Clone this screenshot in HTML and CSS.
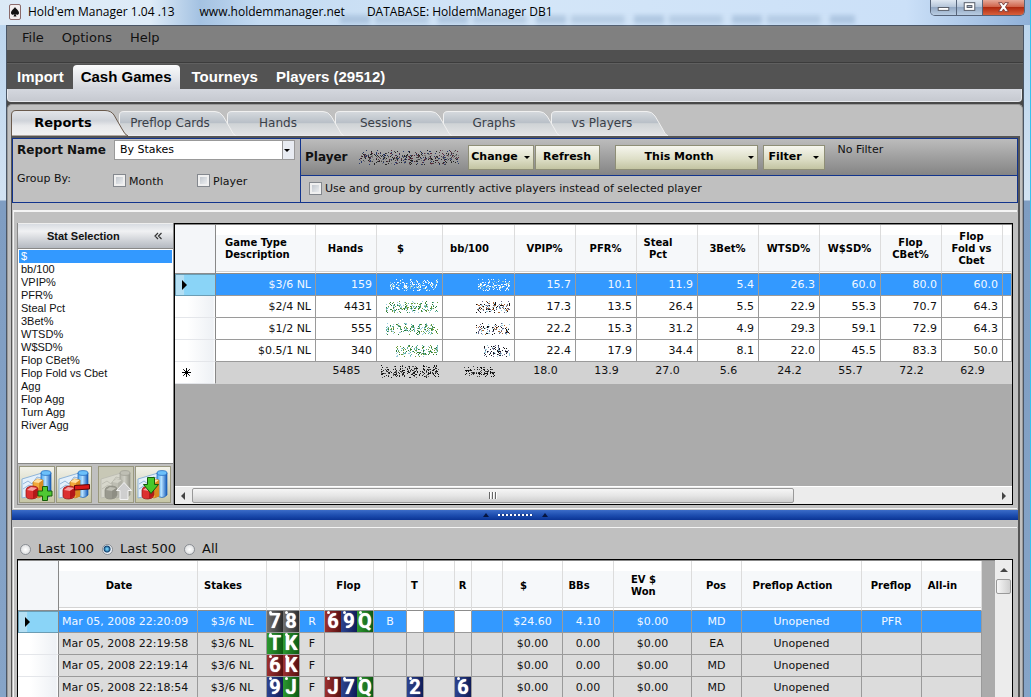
FILE: index.html
```html
<!DOCTYPE html>
<html lang="en">
<head>
<meta charset="utf-8">
<title>Hold'em Manager</title>
<link rel="stylesheet" href="styles.css">
</head>
<body>
<svg class="defs" aria-hidden="true">
  <defs>
    <linearGradient id="g-blue"><stop offset="0" stop-color="#4aa8f4"/><stop offset=".45" stop-color="#b4e0ff"/><stop offset="1" stop-color="#1258b8"/></linearGradient>
    <linearGradient id="g-tab" x2="0" y2="1"><stop offset="0" stop-color="#d6dade"/><stop offset=".45" stop-color="#b9c0c8"/><stop offset=".5" stop-color="#cfd3d6"/><stop offset="1" stop-color="#e4e5e6"/></linearGradient>
    <linearGradient id="g-tab-on" x2="0" y2="1"><stop offset="0" stop-color="#e4e6ea"/><stop offset=".4" stop-color="#cfd3d9"/><stop offset=".6" stop-color="#e8e9eb"/><stop offset="1" stop-color="#f4f4f4"/></linearGradient>
    <symbol id="chart" viewBox="0 0 32 32">
      <path d="M1 10 21 4V25L1 29Z" fill="#e4f0fb" stroke="#8fb4d8"/>
      <path d="M2 15 7 12 11 15 16 8 20 9M2 20 8 16 13 19" fill="none" stroke="#7fa6d0" stroke-width=".8"/>
      <path d="M20 4V26Q25 31 30 26V4Z" fill="url(#g-blue)" stroke="#1c5fb0" stroke-width=".7"/>
      <ellipse cx="25" cy="4" rx="5" ry="2.400" fill="#6cc0fa" stroke="#1c63b8" stroke-width=".7"/>
      <path d="M12 13 16 10 22 11V27L17 29 12 27Z" fill="#f2a93a" stroke="#b8721a" stroke-width=".7"/>
      <path d="M12 13 16 10 22 11 18 14Z" fill="#ffe0a0"/>
      <path d="M18 14 22 11V27L18 29Z" fill="#d98a20"/>
      <path d="M5 21Q5 18 10 17 17 17 17 20V26Q16 30 11 30 5 30 5 27Z" fill="#dc3030" stroke="#8f1010" stroke-width=".7"/>
      <path d="M6 21 10 18 16 19 12 22Z" fill="#f8a0a0"/>
      <path d="M12 22 17 19V26L12 30Z" fill="#b31818"/>
    </symbol>
  </defs>
</svg>

<div class="window">
  <header class="titlebar">
    <span class="glass" aria-hidden="true"></span>
    <svg class="app-icon" viewBox="0 0 12 16" aria-hidden="true"><rect x=".5" y=".5" width="11" height="15" rx="1.5" fill="#f2eeee" stroke="#8a6a6a"/><path d="M6 3C5 5 2 6.5 2 9c0 2 2.500 2.200 3.500 1L4.500 12.500h3L6.500 10C7.500 11.200 10 11 10 9 10 6.500 7 5 6 3Z" fill="#111"/></svg>
    <span class="title-name">Hold'em Manager 1.04 .13</span>
    <span class="title-site">www.holdemmanager.net</span>
    <span>DATABASE: HoldemManager DB1</span>
    <div class="win-buttons">
      <button type="button" aria-label="Minimize"><svg viewBox="0 0 26 15"><rect x="7.500" y="7.500" width="11" height="3" fill="#fff" stroke="#555a66"/></svg></button>
      <button type="button" aria-label="Maximize"><svg viewBox="0 0 26 15"><rect x="7.500" y="2.500" width="11" height="8" fill="#fff" stroke="#555a66"/><rect x="10.500" y="5.500" width="5" height="2" fill="#aab6c8" stroke="#555a66"/></svg></button>
      <button type="button" class="close" aria-label="Close"><svg viewBox="0 0 42 15"><path d="M16 2.500h3.500L21 5l1.500-2.500H26L23 7l3 4.500h-3.500L21 9l-1.500 2.500H16L19 7Z" fill="#fff" stroke="#6b3030" stroke-width=".8"/></svg></button>
    </div>
  </header>

  <div class="client">
    <nav class="menu">
      <button type="button">File</button>
      <button type="button">Options</button>
      <button type="button">Help</button>
    </nav>
    <nav class="main-tabs">
      <button type="button">Import</button>
      <button type="button" class="on">Cash Games</button>
      <button type="button">Tourneys</button>
      <button type="button">Players (29512)</button>
    </nav>
    <div class="strip"></div>

    <main class="page">
      <nav class="sub-tabs">
        <button type="button" class="on"><svg viewBox="0 0 118 26"><path d="M.5 26V5Q.5.500 5 .500H94Q100 .500 103 5L111 19Q114 25 117 26Z" fill="url(#g-tab-on)" stroke="#6a5a4c"/></svg><span>Reports</span></button>
        <button type="button"><svg viewBox="0 0 118 26"><path d="M.5 26V5Q.5 1.500 5 1.500H96Q101 1.500 104 6L111 18Q114 25 117 26Z" fill="url(#g-tab)" stroke="#f0f0f0"/></svg><span>Preflop Cards</span></button>
        <button type="button"><svg viewBox="0 0 118 26"><path d="M.5 26V5Q.5 1.500 5 1.500H96Q101 1.500 104 6L111 18Q114 25 117 26Z" fill="url(#g-tab)" stroke="#f0f0f0"/></svg><span>Hands</span></button>
        <button type="button"><svg viewBox="0 0 118 26"><path d="M.5 26V5Q.5 1.500 5 1.500H96Q101 1.500 104 6L111 18Q114 25 117 26Z" fill="url(#g-tab)" stroke="#f0f0f0"/></svg><span>Sessions</span></button>
        <button type="button"><svg viewBox="0 0 118 26"><path d="M.5 26V5Q.5 1.500 5 1.500H96Q101 1.500 104 6L111 18Q114 25 117 26Z" fill="url(#g-tab)" stroke="#f0f0f0"/></svg><span>Graphs</span></button>
        <button type="button"><svg viewBox="0 0 118 26"><path d="M.5 26V5Q.5 1.500 5 1.500H96Q101 1.500 104 6L111 18Q114 25 117 26Z" fill="url(#g-tab)" stroke="#f0f0f0"/></svg><span>vs Players</span></button>
      </nav>

      <div class="report">
        <div class="filters">
          <section class="report-box">
            <div class="report-row">
              <label class="strong" for="report">Report Name</label>
              <span class="combo"><select id="report"><option>By Stakes</option></select></span>
            </div>
            <div class="group-row">
              <span>Group By:</span>
              <label><input type="checkbox">Month</label>
              <label><input type="checkbox">Player</label>
            </div>
          </section>
          <section class="player-box">
            <div class="player-row">
              <span class="strong">Player</span>
              <span class="specks player-name" data-w="100" data-h="15" data-tones="#222 #444 #5a2a3a #2a3a6a #777" data-seed="3"></span>
              <div class="pair">
                <button type="button" class="tan change">Change<i class="caret"></i></button>
                <button type="button" class="tan refresh">Refresh</button>
              </div>
              <button type="button" class="tan month">This Month<i class="caret"></i></button>
              <button type="button" class="tan filter">Filter<i class="caret"></i></button>
              <span class="no-filter">No Filter</span>
            </div>
            <div class="active-row">
              <label><input type="checkbox">Use and group by currently active players instead of selected player</label>
            </div>
          </section>
        </div>

        <section class="stats">
          <aside class="stat-panel">
            <div class="stat-head"><span>Stat Selection</span><svg viewBox="0 0 8 8"><path d="M4 1 1 4 4 7M7.500 1 4.500 4 7.500 7" fill="none" stroke="#333" stroke-width="1.200"/></svg></div>
            <ul class="stat-list">
              <li class="on">$</li><li>bb/100</li><li>VPIP%</li><li>PFR%</li><li>Steal Pct</li><li>3Bet%</li><li>WTSD%</li><li>W$SD%</li><li>Flop CBet%</li><li>Flop Fold vs Cbet</li><li>Agg</li><li>Flop Agg</li><li>Turn Agg</li><li>River Agg</li>
            </ul>
            <div class="stat-tools">
              <button type="button" aria-label="Add stat"><svg viewBox="0 0 32 32"><use href="#chart"/><path d="M21.500 17.500h5v4.500h4.500v5h-4.500v4.500h-5v-4.500H17v-5h4.500Z" fill="#4fc832" stroke="#145c0c"/></svg></button>
              <button type="button" aria-label="Remove stat"><svg viewBox="0 0 32 32"><use href="#chart"/><path d="M16.500 16.500 31.500 15.500V20L16.500 21Z" fill="#d81818" stroke="#5c0808"/></svg></button>
              <button type="button" class="off" aria-label="Move stat up" disabled><svg viewBox="0 0 32 32"><use href="#chart" class="faded"/><path d="M24 13.500 31.500 21.500H28V30.500H20V21.500H16.500Z" fill="#cfcfcf" stroke="#f2f2f2"/></svg></button>
              <button type="button" aria-label="Move stat down"><svg viewBox="0 0 32 32"><use href="#chart"/><path d="M10.500 8.500h7V15.500H21.500L14 24.500 6.500 15.500H10.500Z" fill="#46c82a" stroke="#145c0c"/></svg></button>
            </div>
          </aside>

          <div class="grid-box">
            <div class="grid-area">
              <table class="grid stakes">
                <colgroup><col class="w41"><col class="w100"><col class="w61"><col class="w66"><col class="w72"><col class="w61"><col class="w61"><col class="w61"><col class="w61"><col class="w61"><col class="w61"><col class="w61"><col class="w61"><col></colgroup>
                <thead><tr><th></th><th class="left">Game Type<br>Description</th><th>Hands</th><th class="sort">$</th><th class="sort">bb/100</th><th>VPIP%</th><th>PFR%</th><th class="sort">Steal<br>Pct</th><th>3Bet%</th><th>WTSD%</th><th>W$SD%</th><th>Flop<br>CBet%</th><th>Flop<br>Fold vs<br>Cbet</th><th></th></tr></thead>
                <tbody>
                  <tr class="on"><th><i class="pointer"></i></th><td>$3/6 NL</td><td>159</td><td><span class="specks" data-w="48" data-h="12" data-tones="#fff #d8ecff #9cc" data-seed="5"></span></td><td><span class="specks" data-w="32" data-h="12" data-tones="#fff #d8ecff #9cc" data-seed="7"></span></td><td>15.7</td><td>10.1</td><td>11.9</td><td>5.4</td><td>26.3</td><td>60.0</td><td>80.0</td><td>60.0</td><td></td></tr>
                  <tr><th></th><td>$2/4 NL</td><td>4431</td><td><span class="specks" data-w="52" data-h="12" data-tones="#2a7a3a #6a9a3a #5ab0a0 #9cd" data-seed="11"></span></td><td><span class="specks" data-w="34" data-h="12" data-tones="#111 #a63 #668 #9cd" data-seed="13"></span></td><td>17.3</td><td>13.5</td><td>26.4</td><td>5.5</td><td>22.9</td><td>55.3</td><td>70.7</td><td>64.3</td><td></td></tr>
                  <tr><th></th><td>$1/2 NL</td><td>555</td><td><span class="specks" data-w="52" data-h="12" data-tones="#2a7a3a #6a9a3a #5ab0a0 #9cd" data-seed="17"></span></td><td><span class="specks" data-w="34" data-h="12" data-tones="#111 #a63 #668 #9cd" data-seed="19"></span></td><td>22.2</td><td>15.3</td><td>31.2</td><td>4.9</td><td>29.3</td><td>59.1</td><td>72.9</td><td>64.3</td><td></td></tr>
                  <tr><th></th><td>$0.5/1 NL</td><td>340</td><td><span class="specks" data-w="42" data-h="12" data-tones="#2a7a3a #6a9a3a #5ab0a0 #9cd" data-seed="23"></span></td><td><span class="specks" data-w="26" data-h="12" data-tones="#111 #223 #668 #9cd" data-seed="29"></span></td><td>22.4</td><td>17.9</td><td>34.4</td><td>8.1</td><td>22.0</td><td>45.5</td><td>83.3</td><td>50.0</td><td></td></tr>
                  <tr class="total"><th><svg class="star" viewBox="0 0 9 9"><path d="M4.500 0V9M0 4.500H9M1.200 1.200 7.800 7.800M7.800 1.200 1.200 7.800" stroke="#000"/></svg></th><td></td><td>5485</td><td><span class="specks" data-w="58" data-h="13" data-tones="#111 #222 #555" data-seed="31"></span></td><td><span class="specks" data-w="32" data-h="11" data-tones="#111 #444" data-seed="37"></span></td><td>18.0</td><td>13.9</td><td>27.0</td><td>5.6</td><td>24.2</td><td>55.7</td><td>72.2</td><td>62.9</td><td></td></tr>
                </tbody>
              </table>
            </div>
            <div class="hscroll"><i class="arrow-left"></i><div class="track"><div class="thumb"><i></i><i></i><i></i></div></div><i class="arrow-right"></i></div>
          </div>
        </section>

        <div class="splitter"><i></i><span></span><i></i></div>

        <section class="hands">
          <div class="last">
            <label><input type="radio" name="last">Last 100</label>
            <label><input type="radio" name="last" checked>Last 500</label>
            <label><input type="radio" name="last">All</label>
          </div>
          <div class="hands-box">
            <div class="hands-area">
              <table class="grid history">
                <colgroup><col class="w41"><col class="w139"><col class="w69"><col class="w33"><col class="w25"><col class="w49"><col class="w33"><col class="w17"><col class="w31"><col class="w17"><col class="w31"><col class="w60"><col class="w51"><col class="w78"><col class="w50"><col class="w120"><col class="w60"><col class="w60"></colgroup>
                <thead><tr><th></th><th class="sort">Date</th><th class="sort">Stakes</th><th></th><th></th><th>Flop</th><th></th><th>T</th><th></th><th>R</th><th></th><th class="sort">$</th><th class="sort">BBs</th><th class="sort"><span class="two">EV $<br>Won</span></th><th>Pos</th><th class="sort">Preflop Action</th><th>Preflop</th><th class="sort">All-in</th></tr></thead>
                <tbody>
                  <tr class="on"><th><i class="pointer"></i></th><td class="date">Mar 05, 2008 22:20:09</td><td>$3/6 NL</td><td><div class="cards"><b class="s">7</b><b class="s">8</b></div></td><td>R</td><td><div class="cards"><b class="h">6</b><b class="d">9</b><b class="c">Q</b></div></td><td>B</td><td class="blank"></td><td></td><td class="blank"></td><td></td><td>$24.60</td><td>4.10</td><td>$0.00</td><td>MD</td><td>Unopened</td><td>PFR</td><td></td></tr>
                  <tr><th></th><td class="date">Mar 05, 2008 22:19:58</td><td>$3/6 NL</td><td><div class="cards"><b class="c">T</b><b class="c">K</b></div></td><td>F</td><td></td><td></td><td></td><td></td><td></td><td></td><td>$0.00</td><td>0.00</td><td>$0.00</td><td>EA</td><td>Unopened</td><td></td><td></td></tr>
                  <tr><th></th><td class="date">Mar 05, 2008 22:19:14</td><td>$3/6 NL</td><td><div class="cards"><b class="h">6</b><b class="h">K</b></div></td><td>F</td><td></td><td></td><td></td><td></td><td></td><td></td><td>$0.00</td><td>0.00</td><td>$0.00</td><td>MD</td><td>Unopened</td><td></td><td></td></tr>
                  <tr><th></th><td class="date">Mar 05, 2008 22:18:54</td><td>$3/6 NL</td><td><div class="cards"><b class="d">9</b><b class="c">J</b></div></td><td>F</td><td><div class="cards"><b class="h">J</b><b class="d">7</b><b class="c">Q</b></div></td><td></td><td><div class="cards"><b class="d">2</b></div></td><td></td><td><div class="cards"><b class="d">6</b></div></td><td></td><td>$0.00</td><td>0.00</td><td>$0.00</td><td>MD</td><td>Unopened</td><td></td><td></td></tr>
                </tbody>
              </table>
            </div>
            <div class="vscroll"><i class="arrow-up"></i><div class="vthumb"></div></div>
          </div>
        </section>
      </div>
    </main>
  </div>
</div>
<script src="script.js"></script>
</body>
</html>
```
FILE: styles.css
```css
* { box-sizing: border-box; }
body {
  margin: 0;
  height: 100vh;
  overflow: hidden;
  font: 11px/14px Verdana, "DejaVu Sans", sans-serif;
  color: #111;
}
button { font: inherit; color: inherit; border: 0; padding: 0; background: none; }
ul { margin: 0; padding: 0; list-style: none; }
.defs { position: absolute; width: 0; height: 0; }
.strong { font-size: 12px; font-weight: bold; }

/* Window frame */
.window {
  height: 100%;
  display: flex;
  flex-direction: column;
  padding: 0 6px 0 6px;
  border-right: 1px solid #35c2ee;
  background: linear-gradient(#b9d4ee 0, #d2e2f2 200px, #7f9dc2 201px, #86a4c8 100%);
}
.titlebar {
  position: relative;
  flex: none;
  height: 25px;
  display: flex;
  margin: 0 -6px;
  padding: 0 5px 0 9px;
  font: 12px/24px "Open Sans", "Noto Sans", sans-serif;
  color: #000;
  background: linear-gradient(90deg, #dbe9f6 0, #dfecf8 150px, #a4c2e2 200px, #c4dbf2 260px, #d4e6f8 50%, #cbe0f8 88%, #8fb0d8 100%);
}
.titlebar > * { position: relative; }
.titlebar .glass {
  position: absolute;
  left: 33%;
  right: 17%;
  top: 15px;
  height: 9px;
  filter: blur(2px);
  opacity: .45;
  background: repeating-linear-gradient(90deg, #8ba8c8 0 29px, #cfe2f6 31px 34px, #9ab4d0 36px 87px, #cfe2f6 90px 98px);
}
.app-icon { width: 12px; height: 16px; margin: 4px 7px 0 0; }
.title-name { margin-right: 25px; }
.title-site { margin-right: 22px; }
.win-buttons {
  display: flex;
  align-self: flex-start;
  margin-left: auto;
  border: 1px solid #56647a;
  border-top: 0;
  border-radius: 0 0 5px 5px;
  overflow: hidden;
}
.win-buttons button {
  width: 26px;
  height: 15px;
  border-right: 1px solid #56647a;
  background: linear-gradient(#dfe8f2, #b6c6da 45%, #94a9c4 50%, #b8cce2);
}
.win-buttons svg { display: block; width: 100%; height: 15px; }
.win-buttons .close { width: 41px; border-right: 0; background: linear-gradient(#e6a898, #d0654c 45%, #b02a10 50%, #d8603c); }
.client {
  flex: 1;
  min-height: 0;
  display: flex;
  flex-direction: column;
  border: 1px solid #4a5666;
  border-bottom: 0;
  background: #484848;
}

/* Menu and main tabs */
.menu {
  display: flex;
  gap: 18px;
  flex: none;
  height: 24px;
  padding-left: 15px;
  font-size: 13px;
  background: #808080;
}
.main-tabs {
  display: flex;
  align-items: flex-end;
  flex: none;
  height: 39px;
  padding-left: 2px;
  font: bold 15px/24px "Liberation Sans", Arial, sans-serif;
  color: #fff;
  background: linear-gradient(#505050 12px, #3c3c3c 12px 13px, #606060 13px 14px, #535353 14px);
}
.main-tabs button { padding: 0 8px; }
.main-tabs button + button { padding: 0 6px 0 12px; }
.main-tabs .on {
  margin-left: 1px;
  color: #000;
  border-radius: 4px 4px 0 0;
  background: linear-gradient(#fafbfc, #d2d5dc);
}
.main-tabs button.on { padding: 0 8px; }
.strip { flex: none; height: 13px; margin: 0 1px 0 0; border: 1px solid #e6e8ec; border-top: 0; border-radius: 0 0 4px 4px; background: linear-gradient(#d4d7de, #c6c9d0); }

/* Page and report tabs */
.page {
  flex: 1;
  min-height: 0;
  display: flex;
  flex-direction: column;
  margin: 2px 0 0 0;
  padding: 5px 2px 0 3px;
  border: 1px solid #999;
  border-bottom: 0;
  border-radius: 5px 5px 0 0;
  background: #c0c0c0;
}
.sub-tabs { display: flex; flex: none; height: 26px; }
.sub-tabs button { position: relative; width: 108px; font-size: 12px; line-height: 24px; text-align: center; color: #3a4048; }
.sub-tabs svg { position: absolute; left: 0; top: 0; width: 118px; height: 26px; }
.sub-tabs span { position: relative; padding-right: 6px; }
.sub-tabs button:nth-child(1) { z-index: 6; font-size: 13px; font-weight: bold; color: #000; }
.sub-tabs button:nth-child(1) span { padding-right: 4px; }
.sub-tabs button:nth-child(2) { z-index: 5; }
.sub-tabs button:nth-child(3) { z-index: 4; }
.sub-tabs button:nth-child(4) { z-index: 3; }
.sub-tabs button:nth-child(5) { z-index: 2; }
.report {
  flex: 1;
  min-height: 0;
  display: flex;
  flex-direction: column;
  border: solid #555;
  border-width: 2px 2px 0 1px;
}

/* Filter panels */
.filters { display: flex; flex: none; }
.report-box { width: 288px; padding: 0 5px 0 4px; border: 1px solid #12348c; border-right: 0; }
.report-row { display: flex; justify-content: space-between; line-height: 22px; }
.combo {
  position: relative;
  width: 181px;
  height: 20px;
  margin-top: 1px;
  border: 1px solid #999;
  background: #fff;
}
.combo::after {
  content: "";
  position: absolute;
  right: 4px;
  top: 8px;
  border: solid transparent;
  border-width: 3px 3px 0;
  border-top-color: #000;
}
.combo select {
  appearance: none;
  display: block;
  width: 100%;
  height: 18px;
  padding: 0 14px 0 5px;
  border: 0;
  font: inherit;
  line-height: 18px;
  color: #000;
  background: linear-gradient(90deg, #999 1px, #e8ecf2 1px) right / 12px 100% no-repeat;
}
.group-row { display: flex; padding-top: 10px; }
.group-row > span { width: 96px; line-height: 16px; }
.group-row label { display: flex; gap: 3px; width: 84px; padding-top: 4px; }
input[type="checkbox"] {
  appearance: none;
  flex: none;
  width: 13px;
  height: 13px;
  margin: 0;
  border: 1px solid #84888e;
  background: linear-gradient(135deg, #b8bec6, #f6f7f8);
  box-shadow: inset 0 0 0 2px #f0f0f0;
}
.group-row input { margin-top: -1px; }
.player-box { flex: 1; border: 1px solid #12348c; }
.player-row {
  display: flex;
  align-items: center;
  height: 37px;
  padding-left: 4px;
  background: linear-gradient(#bcbcbc, #848484);
  border-bottom: 1px solid #12348c;
}
.player-name { margin: 0 9px 0 11px; }
.pair { display: flex; gap: 1px; margin-right: 15px; }
.tan {
  display: flex;
  align-items: center;
  justify-content: center;
  height: 25px;
  font-weight: bold;
  color: #000;
  border: 1px solid #8e8e76;
  background: linear-gradient(#f6f6ee, #dedfc8 55%, #c3c4a2);
}
.caret { border: solid transparent; border-width: 3px 3px 0; border-top-color: #000; }
.change { width: 66px; gap: 6px; }
.refresh { width: 65px; }
.month { width: 143px; margin-right: 5px; justify-content: flex-end; padding-right: 3px; gap: 34px; }
.filter { width: 62px; margin-right: 13px; gap: 11px; }
.no-filter { align-self: flex-start; padding-top: 4px; }
.active-row { height: 26px; padding: 6px 8px; }
.active-row label { display: flex; gap: 3px; }

/* Stats section */
.stats {
  display: flex;
  flex: none;
  min-height: 299px;
  margin: 7px 1px 0;
  padding: 11px 4px 3px 3px;
  border: 1px solid #f4f4f4;
  border-right: 0;
  border-top-width: 2px;
}
.stat-panel { display: flex; flex-direction: column; width: 157px; border: 1px solid #888; border-top: 0; }
.stat-head {
  display: flex;
  align-items: center;
  justify-content: space-between;
  height: 25px;
  padding: 0 11px 0 29px;
  font: bold 11px/14px "Liberation Sans", Arial, sans-serif;
  border-top: 1px solid #eee;
  background: linear-gradient(#d8dce2, #f0f1f3 30%, #b4b9c1);
}
.stat-head svg { width: 8px; height: 8px; }
.stat-list {
  flex: 1;
  padding: 1px;
  border: 1px solid #888;
  border-width: 1px 0;
  font: 11px/13px "Liberation Sans", Arial, sans-serif;
  background: #fff;
}
.stat-list li { padding-left: 2px; }
.stat-list .on { color: #fff; background: #3399ff; }
.stat-tools { display: flex; gap: 1px; padding: 2px 1px 1px; }
.stat-tools button { width: 36px; height: 37px; border: 1px solid #99987f; background: linear-gradient(#f2f2ea, #c6c6a6); }
.stat-tools .off { margin-left: 5px; background: #c8c8b6; }
.stat-tools svg { display: block; width: 32px; height: 32px; margin: 0 auto; }
.faded { filter: grayscale(1); opacity: .4; }

/* Data grids */
.grid-box { flex: 1; min-width: 0; display: flex; flex-direction: column; border: 1px solid #000; }
.grid-area { flex: 1; border-top: 1px solid #888; overflow: hidden; background: #ababab; }
.grid { table-layout: fixed; border-collapse: separate; border-spacing: 0; }
.stakes { width: 100%; }
.history { width: 964px; }
.w17 { width: 17px; } .w25 { width: 25px; } .w31 { width: 31px; } .w33 { width: 33px; }
.w41 { width: 41px; } .w49 { width: 49px; } .w50 { width: 50px; } .w51 { width: 51px; }
.w60 { width: 60px; } .w61 { width: 61px; } .w66 { width: 66px; } .w69 { width: 69px; }
.w72 { width: 72px; } .w78 { width: 78px; } .w100 { width: 100px; } .w120 { width: 120px; } .w139 { width: 139px; }
.grid th, .grid td { padding: 0; overflow: hidden; white-space: nowrap; }
.grid thead th {
  height: 49px;
  padding-right: 1px;
  font-size: 10px;
  line-height: 12px;
  color: #000;
  border-right: 1px solid #dcdcdc;
  border-bottom: 1px solid #8c8c8c;
  background: linear-gradient(#fff 10px, #f6f8fa 10px, #f6f8fa 46px, #d4d4d4 46px 47px, #fff 47px);
}
.grid thead th:first-child { border-right-color: #888; background: #f4f6f9; }
.grid thead .left { padding-left: 9px; text-align: left; }
.grid thead .sort { padding-right: 18px; }
.two { display: inline-block; text-align: left; }
.grid tbody th { height: 22px; text-align: left; background: linear-gradient(90deg, #fff 30%, #eef1f5 95%, #fff); border-right: 1px solid #888; border-bottom: 1px solid #e4e6ea; }
.grid td { height: 22px; border-right: 1px solid #9a9a9a; border-bottom: 1px solid #9a9a9a; }
.grid .on th { border: 1px solid #6b9db4; border-right-color: #888; background: linear-gradient(90deg, #b4dff4 20%, #8ad4f7 22%); }
.grid .on td { color: #f2f8ff; background: #3399ff; }
.pointer { display: block; width: 6px; margin-left: 6px; border: solid transparent; border-width: 5px 0 5px 5px; border-left-color: #000; }
.stakes td { padding-right: 4px; text-align: right; background: #fff; }
.stakes .total td { padding: 0 0 4px; text-align: center; border: 0; background: #d2d2d2; }
.star { display: block; width: 9px; height: 9px; margin-left: 7px; }
.history thead th { height: 50px; }
.history td { text-align: center; background: #dcdcdc; }
.history td.date { padding-left: 3px; text-align: left; }
.history .on td.blank { background: #fff; }
.specks { display: inline-block; vertical-align: middle; line-height: 0; }
.specks svg { display: block; }
.cards { display: flex; height: 21px; }
.cards b {
  position: relative;
  width: 16px;
  font: bold 20px/21px Roboto, "Noto Sans", sans-serif;
  text-align: center;
  color: #fff;
  text-shadow: 0 0 1px #fff;
}
.cards b::before { content: ""; position: absolute; left: 2px; top: 0; width: 3px; height: 3px; border-radius: 50%; background: #fff; }
.cards .s { background: linear-gradient(90deg, #707070, #2c2c2c); }
.cards .h { background: linear-gradient(90deg, #9c3030, #581010); }
.cards .d { background: linear-gradient(90deg, #2c4490, #101c58); }
.cards .c { background: linear-gradient(90deg, #2c9830, #0e5a12); }

/* Scroll bars */
.hscroll { display: flex; align-items: center; gap: 7px; height: 18px; padding: 0 6px; border-top: 1px solid #fff; background: #ececec; }
.track { flex: 1; }
.thumb {
  display: flex;
  align-items: center;
  justify-content: center;
  gap: 1px;
  width: 75%;
  height: 15px;
  border: 1px solid #999;
  border-radius: 2px;
  background: linear-gradient(#f6f6f6, #e6e6e6 50%, #cfcfcf);
}
.thumb i { width: 2px; height: 7px; background: linear-gradient(90deg, #666 1px, #fff 1px); }
.arrow-left, .arrow-right, .arrow-up { flex: none; border: solid transparent; }
.arrow-left { border-width: 4px 4px 4px 0; border-right-color: #444; }
.arrow-right { border-width: 4px 0 4px 4px; border-left-color: #444; }
.arrow-up { border-width: 0 4px 4px; border-bottom-color: #444; }

/* Splitter */
.splitter { display: flex; align-items: center; justify-content: center; gap: 9px; flex: none; height: 10px; margin-top: 1px; background: linear-gradient(#3b6cc8, #1c4cae 55%, #0b3494); }
.splitter i { border: solid transparent; border-width: 0 3px 4px; border-bottom-color: #061540; }
.splitter span { width: 35px; height: 2px; background: repeating-linear-gradient(90deg, #fff 0 2px, #1c3e8c 2px 4px); }

/* Hand history */
.hands {
  flex: 1;
  min-height: 0;
  display: flex;
  flex-direction: column;
  margin: 7px 1px 0;
  padding: 0 4px 0 3px;
  border: 1px solid #f4f4f4;
  border-right: 0;
  border-bottom: 0;
}
.last { display: flex; gap: 8px; flex: none; height: 31px; padding: 11px 0 0 3px; font-size: 13px; line-height: 16px; }
.last label { display: flex; align-items: center; gap: 7px; }
input[type="radio"] {
  appearance: none;
  width: 11px;
  height: 11px;
  margin: 0;
  border: 1px solid #8a8e94;
  border-radius: 50%;
  background: radial-gradient(#fff, #d4d6d8);
}
input[type="radio"]:checked { background: radial-gradient(circle at 45% 45%, #6ac4ee 0 1px, #10406e 3px, #f0f4f8 4px); }
.hands-box { flex: 1; min-height: 0; display: flex; overflow: hidden; border: 1px solid #000; border-bottom: 0; }
.hands-area { flex: 1; min-width: 0; overflow: hidden; border-top: 1px solid #888; background: #ababab; }
.vscroll { display: flex; flex-direction: column; align-items: center; width: 17px; padding-top: 8px; background: #ececec; }
.vthumb { width: 15px; height: 15px; margin-top: 7px; border: 1px solid #999; border-radius: 2px; background: linear-gradient(90deg, #f6f6f6, #cfcfcf); }
```
FILE: script.js
```js
// Fills each .specks element with small dots that hide a private value.
const NS = "http://www.w3.org/2000/svg";
document.querySelectorAll(".specks").forEach((host) => {
  const w = Number(host.dataset.w);
  const h = Number(host.dataset.h);
  const tones = host.dataset.tones.split(" ");
  let state = Number(host.dataset.seed) * 7919;
  const next = () => {
    state = (state * 1103515245 + 12345) % 2147483648;
    return state / 2147483648;
  };
  const svg = document.createElementNS(NS, "svg");
  svg.setAttribute("width", w);
  svg.setAttribute("height", h);
  svg.setAttribute("aria-hidden", "true");
  for (let x = 0; x < w; x += 1) {
    const wave = Math.abs(Math.sin(x * 0.47 + w));
    const middle = h / 2 + Math.sin(x * 0.9) * 1.5;
    for (let y = 0; y < h; y += 1) {
      const falloff = Math.max(0, 1 - Math.abs(y - middle) / (h * 0.62));
      if (next() < (0.15 + 0.5 * wave) * falloff) {
        const dot = document.createElementNS(NS, "rect");
        dot.setAttribute("x", x);
        dot.setAttribute("y", y);
        dot.setAttribute("width", 1);
        dot.setAttribute("height", 1);
        dot.setAttribute("fill", tones[Math.floor(next() * tones.length)]);
        svg.appendChild(dot);
      }
    }
  }
  host.appendChild(svg);
});
```
